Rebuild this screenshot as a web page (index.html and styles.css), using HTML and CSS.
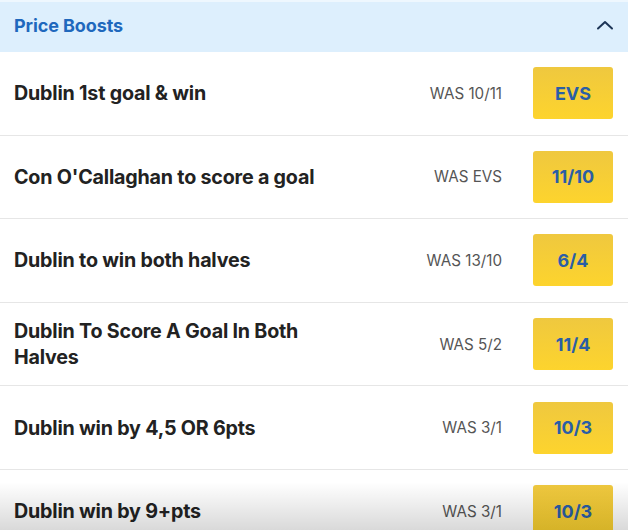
FILE: index.html
```html
<!DOCTYPE html>
<html>
<head>
<meta charset="utf-8">
<link rel="stylesheet" href="styles.css">
</head>
<body>
<div class="panel">
  <div class="header">
    <span class="title">Price Boosts</span>
    <svg class="chev" width="18" height="12" viewBox="0 0 18 12"><path d="M2 9.5 L9 3 L16 9.5" fill="none" stroke="#1d3557" stroke-width="2" stroke-linecap="round" stroke-linejoin="round"/></svg>
  </div>
  <div class="row"><div class="name">Dublin 1st goal &amp; win</div><div class="was">WAS 10/11</div><div class="odds">EVS</div></div>
  <div class="row"><div class="name">Con O'Callaghan to score a goal</div><div class="was">WAS EVS</div><div class="odds">11/10</div></div>
  <div class="row"><div class="name">Dublin to win both halves</div><div class="was">WAS 13/10</div><div class="odds">6/4</div></div>
  <div class="row"><div class="name">Dublin To Score A Goal In Both Halves</div><div class="was">WAS 5/2</div><div class="odds">11/4</div></div>
  <div class="row"><div class="name">Dublin win by 4,5 OR 6pts</div><div class="was">WAS 3/1</div><div class="odds">10/3</div></div>
  <div class="row"><div class="name">Dublin win by 9+pts</div><div class="was">WAS 3/1</div><div class="odds">10/3</div></div>
  <div class="fade"></div>
</div>
</body>
</html>
```
FILE: styles.css
```css
html, body { margin: 0; padding: 0; background: #fff; }
body { font-family: Inter, "Noto Sans", sans-serif; width: 628px; height: 530px; overflow: hidden; }
.panel { position: relative; width: 628px; height: 530px; overflow: hidden; }
.header { height: 52px; box-sizing: border-box; box-shadow: inset 0 2px 0 #eef7fe; background: #ddeffd; display: flex; align-items: center; justify-content: space-between; padding: 0 14px 2px 14px; }
.title { color: #1f68bd; font-weight: 700; font-size: 18px; letter-spacing: -0.1px; }
.row { display: flex; align-items: center; padding: 15.3px 15px 15.3px 14px; border-bottom: 1px solid #e6e6e6; }
.name { flex: 1; max-width: 330px; color: #222; font-size: 19.7px; font-weight: 700; line-height: 26px; letter-spacing: -0.2px; }
.was { margin-left: auto; color: #555; font-size: 15.2px; margin-right: 31px; }
.odds { width: 80px; height: 52px; border-radius: 3px; background: linear-gradient(#efc83f, #fdd42d); color: #2a5ea6; font-size: 18px; font-weight: 700; display: flex; align-items: center; justify-content: center; }
.fade { position: absolute; left: 0; right: 0; bottom: 0; height: 48px; background: linear-gradient(rgba(0,0,0,0), rgba(0,0,0,0.15)); pointer-events: none; }
```
